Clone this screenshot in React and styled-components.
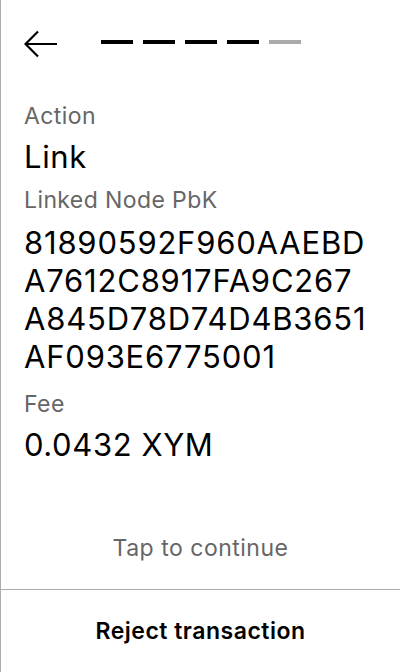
import React from "react";
import styled, { createGlobalStyle } from "styled-components";

const GlobalStyle = createGlobalStyle`
  * {
    box-sizing: border-box;
  }

  html,
  body {
    margin: 0;
    padding: 0;
    background: #ffffff;
  }

  body {
    font-family: Inter, "Noto Sans", sans-serif;
    color: #000000;
  }
`;

const steps = [true, true, true, true, false];

const App = () => {
  return (
    <>
      <GlobalStyle />
      <Screen>
        <Header>
          <BackButton aria-label="Back">
            <svg width="34" height="28" viewBox="0 0 34 28" fill="none">
              <path
                d="M33 14H2M14 1.5L1.5 14L14 26.5"
                stroke="#000"
                strokeWidth="2.2"
              />
            </svg>
          </BackButton>
          <Steps>
            {steps.map((done, i) => (
              <Step key={i} $done={done} />
            ))}
          </Steps>
        </Header>

        <Details>
          <Field>
            <Label>Action</Label>
            <Value>Link</Value>
          </Field>
          <Field $last>
            <Label>Linked Node PbK</Label>
            <Hash>
              81890592F960AAEBD
              <br />
              A7612C8917FA9C267
              <br />
              A845D78D74D4B3651
              <br />
              AF093E6775001
            </Hash>
          </Field>
          <Field>
            <Label>Fee</Label>
            <Value>0.0432 XYM</Value>
          </Field>
        </Details>

        <Continue>Tap to continue</Continue>

        <Footer>
          <RejectButton>Reject transaction</RejectButton>
        </Footer>
      </Screen>
    </>
  );
};

const Screen = styled.div`
  display: flex;
  flex-direction: column;
  width: 400px;
  height: 672px;
  border-left: 1px solid #adadad;
  overflow: hidden;
`;

const Header = styled.div`
  display: flex;
  align-items: center;
  gap: 43px;
  padding: 29px 0 0 23px;
  height: 58px;
`;

const BackButton = styled.div`
  display: flex;
  width: 34px;
  height: 28px;
`;

const Steps = styled.div`
  display: flex;
  gap: 10px;
  margin-top: -3px;
`;

const Step = styled.div`
  width: 32px;
  height: 4px;
  background: ${(p) => (p.$done ? "#000000" : "#aaaaaa")};
`;

const Details = styled.div`
  display: flex;
  flex-direction: column;
  padding: 44px 16px 0 23px;
`;

const Field = styled.div`
  display: flex;
  flex-direction: column;
  margin-bottom: ${(p) => (p.$last ? "14px" : "10px")};
`;

const Label = styled.div`
  font-size: 23px;
  line-height: 28px;
  letter-spacing: 0.4px;
  color: #666666;
  margin-bottom: 8px;
`;

const Value = styled.div`
  font-size: 31px;
  line-height: 38px;
  letter-spacing: 0.6px;
  color: #000000;
`;

const Hash = styled.div`
  font-size: 31px;
  line-height: 38px;
  letter-spacing: 0.8px;
  color: #000000;
  margin-top: 2px;
`;

const Continue = styled.div`
  margin-top: auto;
  padding-bottom: 27px;
  text-align: center;
  font-size: 23px;
  line-height: 28px;
  letter-spacing: 0.5px;
  color: #666666;
`;

const Footer = styled.div`
  display: flex;
  align-items: center;
  justify-content: center;
  height: 83px;
  border-top: 1px solid #adadad;
`;

const RejectButton = styled.div`
  font-size: 23px;
  font-weight: 600;
  line-height: 28px;
  letter-spacing: 0.5px;
  color: #000000;
`;

export default App;
